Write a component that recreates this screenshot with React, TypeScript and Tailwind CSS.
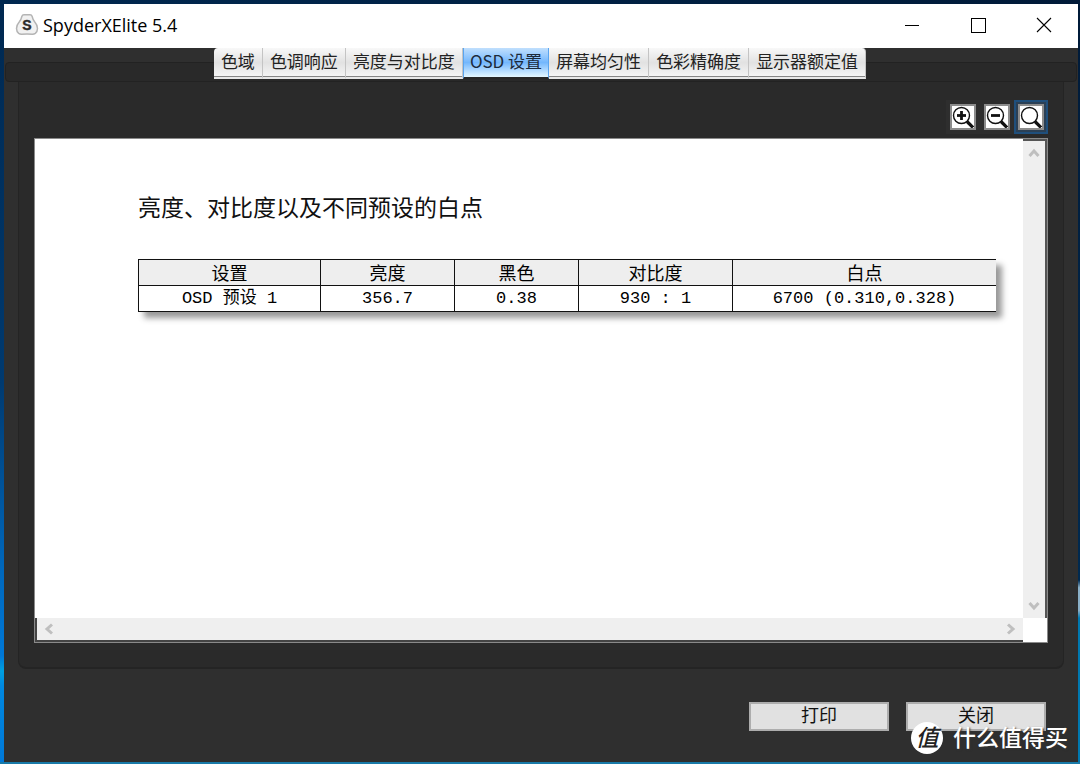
import { useState } from 'react'
import clsx from 'clsx'

const TABS = ['色域', '色调响应', '亮度与对比度', 'OSD 设置', '屏幕均匀性', '色彩精确度', '显示器额定值']

const COLUMNS = [
    { label: '设置', width: 'w-[182px]' },
    { label: '亮度', width: 'w-[134px]' },
    { label: '黑色', width: 'w-[124px]' },
    { label: '对比度', width: 'w-[154px]' },
    { label: '白点', width: '' },
]

const ROWS = [['OSD 预设 1', '356.7', '0.38', '930 : 1', '6700 (0.310,0.328)']]

type ZoomMode = 'in' | 'out' | 'fit'

const ZOOM_TOOLS: { mode: ZoomMode; label: string }[] = [
    { mode: 'in', label: '放大' },
    { mode: 'out', label: '缩小' },
    { mode: 'fit', label: '适合窗口' },
]

function AppLogo() {
    return (
        <svg className="h-6 w-6" viewBox="0 0 24 24">
            <path
                d="M9 1.800h6q1.600 0 2.200 1.800q.6 3 2.600 5.400q2.700 3 2.700 6.500q0 3-2.200 4.800q-1.300 1-3 .9q-5.300-.6-10.600 0q-1.700.1-3-.9q-2.200-1.800-2.200-4.800q0-3.500 2.700-6.500q2-2.400 2.600-5.400q.6-1.800 2.200-1.800z"
                fill="#f1f1f1"
                stroke="#b4b4b4"
                strokeWidth="1.5"
            />
            <text x="12" y="17" textAnchor="middle" fontSize="14" fontWeight="bold" fontFamily="Liberation Sans, sans-serif" fill="#2b2b2b" stroke="#2b2b2b" strokeWidth="0.4">
                S
            </text>
        </svg>
    )
}

function ZoomIcon({ mode }: { mode: ZoomMode }) {
    return (
        <svg className="h-[22px] w-[22px]" viewBox="0 0 22 22" fill="none" stroke="#111">
            <circle cx="9.500" cy="9.500" r="8" strokeWidth="1.400" />
            <path d="M15 15.500l6 6" strokeWidth="3.200" />
            {mode !== 'fit' && <path d="M5 9.500h9" strokeWidth="2.800" />}
            {mode === 'in' && <path d="M9.500 5v9" strokeWidth="2.800" />}
        </svg>
    )
}

function Arrow({ d }: { d: string }) {
    return (
        <svg className="h-3 w-3" viewBox="0 0 12 12" fill="none" stroke="#bfbfbf" strokeWidth="3">
            <path d={d} />
        </svg>
    )
}

function TitleBar() {
    return (
        <header className="flex h-11 items-center bg-white pr-px pb-0.5 pl-[11px]">
            <AppLogo />
            <h1 className="ml-1 flex-1 font-['Open_Sans',sans-serif] text-[18px] leading-6 text-black">SpyderXElite 5.4</h1>
            <div className="flex h-full">
                <button aria-label="最小化" className="flex w-[66px] items-center justify-center">
                    <svg className="h-4 w-4" viewBox="0 0 16 16" stroke="#000" shapeRendering="crispEdges">
                        <path d="M1 8.500h14" />
                    </svg>
                </button>
                <button aria-label="最大化" className="flex w-[66px] items-center justify-center">
                    <svg className="h-4 w-4" viewBox="0 0 16 16" stroke="#000" fill="none" shapeRendering="crispEdges">
                        <path d="M1.500 1.500h14v14h-14z" />
                    </svg>
                </button>
                <button aria-label="关闭窗口" className="flex w-[66px] items-center justify-center">
                    <svg className="h-4 w-4" viewBox="0 0 16 16" stroke="#000" strokeWidth="1.100">
                        <path d="M1 1l14 14M15 1L1 15" />
                    </svg>
                </button>
            </div>
        </header>
    )
}

function TabBar({ active, onChange }: { active: number; onChange: (i: number) => void }) {
    return (
        <div className="relative flex h-[34px] items-start justify-center pr-0.5">
            <div className="absolute inset-x-px top-[14px] bottom-0 rounded border border-[#222] bg-[#292929]" />
            <div role="tablist" className="relative flex">
                {TABS.map((tab, i) => (
                    <button
                        key={tab}
                        role="tab"
                        aria-selected={i === active}
                        onClick={() => onChange(i)}
                        className={clsx(
                            'h-[31px] whitespace-nowrap pb-1 text-[17px] leading-[26px]',
                            i === active
                                ? 'border-x border-b-2 border-x-[#5aa5f0] border-b-[#262626] bg-linear-to-b from-[#c0dffd] via-[#73b7fd] to-[#e4f7ff] px-1.5 text-[#1c2a3a]'
                                : 'border-r border-b-2 border-r-[#c4c4c4] border-b-[#e8e8e8] bg-linear-to-b from-[#f8f8f8] via-[#e2e2e2] to-[#f6f6f6] px-[7px] text-[#222] shadow-[inset_0_-1px_#858585]',
                            i === 0 && 'rounded-tl',
                            i === TABS.length - 1 && 'rounded-tr'
                        )}
                    >
                        {tab}
                    </button>
                ))}
            </div>
        </div>
    )
}

function ReportTable() {
    return (
        <table className="w-full table-fixed border-collapse text-center text-black shadow-[6px_6px_6px_#999]">
            <thead className="bg-[#eee]">
                <tr className="h-[26px]">
                    {COLUMNS.map(col => (
                        <th
                            key={col.label}
                            className={clsx('border border-[#111] p-0 pb-0.5 text-[18px] leading-[22px] font-normal last:border-r-0', col.width)}
                        >
                            {col.label}
                        </th>
                    ))}
                </tr>
            </thead>
            <tbody className="bg-white">
                {ROWS.map(row => (
                    <tr key={row[0]} className="h-[26px]">
                        {row.map(cell => (
                            <td
                                key={cell}
                                className="border border-[#111] p-0 font-['Liberation_Mono','Noto_Sans_CJK_SC',monospace] text-[17px] leading-6 last:border-r-0"
                            >
                                {cell}
                            </td>
                        ))}
                    </tr>
                ))}
            </tbody>
        </table>
    )
}

function ReportView() {
    return (
        <div className="flex flex-1 flex-col border border-[#8a8a8a] bg-white">
            <div className="flex flex-1">
                <main className="flex-1 pt-[50px] pr-[27px] pl-[103px]">
                    <h2 className="mb-9 text-[23px] leading-[34px] text-[#111]">亮度、对比度以及不同预设的白点</h2>
                    <ReportTable />
                </main>
                <div className="flex w-6 flex-col items-center justify-between border-t-2 border-r-2 border-[#555] bg-[#efefef] py-1.5">
                    <button aria-label="向上滚动"><Arrow d="M1.500 9L6 4l4.500 5" /></button>
                    <button aria-label="向下滚动"><Arrow d="M1.500 3L6 8l4.500-5" /></button>
                </div>
            </div>
            <div className="mr-6 flex h-6 items-center justify-between border-b-2 border-l-2 border-[#444] bg-[#efefef] px-1.5">
                <button aria-label="向左滚动"><Arrow d="M9 1.500L4 6l5 4.500" /></button>
                <button aria-label="向右滚动"><Arrow d="M3 1.500L8 6l-5 4.500" /></button>
            </div>
        </div>
    )
}

function Watermark() {
    return (
        <div className="pointer-events-none absolute right-2.5 bottom-2 flex items-center gap-2.5 text-white">
            <span className="flex h-8 w-8 items-center justify-center rounded-full bg-white pb-1 text-[23px] leading-7 font-medium text-[#222] italic">值</span>
            <span className="pb-1 text-[23px] leading-7 font-medium [text-shadow:1px_1px_2px_#333]">什么值得买</span>
        </div>
    )
}

export default function App() {
    const [tab, setTab] = useState(3)
    const [zoom, setZoom] = useState<ZoomMode>('fit')

    return (
        <div className="flex min-h-screen flex-col font-['Noto_Sans_CJK_SC',sans-serif]">
            <div className="h-1 bg-linear-to-r from-[#002850] to-[#001a38]" />
            <div className="flex flex-1">
                {/* Desktop wallpaper showing at the window's edges */}
                <div className="w-1 bg-[linear-gradient(#002850,#003a70_50%,#0068bd_75%,#0078d7_86%,#00a0e0_88%,#0088e0_90%,#0078d7)]" />
                <div className="relative flex flex-1 flex-col bg-[#2f2f2f]">
                    <TitleBar />
                    <TabBar active={tab} onChange={setTab} />
                    <section className="mx-[14px] flex flex-1 flex-col rounded-b-lg border-x border-b-2 border-[#242424] bg-[#2a2a2a] px-[15px] pt-[18px] pb-6">
                        <div className="mb-1 flex self-end bg-[#2e2e2e]">
                            {ZOOM_TOOLS.map(({ mode, label }) => (
                                <button
                                    key={mode}
                                    aria-label={label}
                                    aria-pressed={zoom === mode}
                                    onClick={() => setZoom(mode)}
                                    className={clsx('border-2 p-0.5', zoom === mode ? 'border-[#1f4f7c] bg-[#2b4055]' : 'border-transparent')}
                                >
                                    <span className="flex border-2 border-[#8c8c8c] bg-white">
                                        <ZoomIcon mode={mode} />
                                    </span>
                                </button>
                            ))}
                        </div>
                        <ReportView />
                    </section>
                    <footer className="flex justify-end gap-[17px] pt-[33px] pr-8 pb-[31px]">
                        <button className="h-[29px] w-[140px] border-2 border-[#adadad] bg-[#e1e1e1] pb-1 text-[18px] leading-[21px] text-[#111]">打印</button>
                        <button className="h-[29px] w-[140px] border-2 border-[#adadad] bg-[#e1e1e1] pb-1 text-[18px] leading-[21px] text-[#111]">关闭</button>
                    </footer>
                    <Watermark />
                </div>
                <div className="w-0.5 bg-[linear-gradient(#001a38,#002a50_76%,#8ab0c8_77%,#8ab0c8_80%,#0078b0_81%)]" />
            </div>
            <div className="h-0.5 bg-[#197aa8]" />
        </div>
    )
}
